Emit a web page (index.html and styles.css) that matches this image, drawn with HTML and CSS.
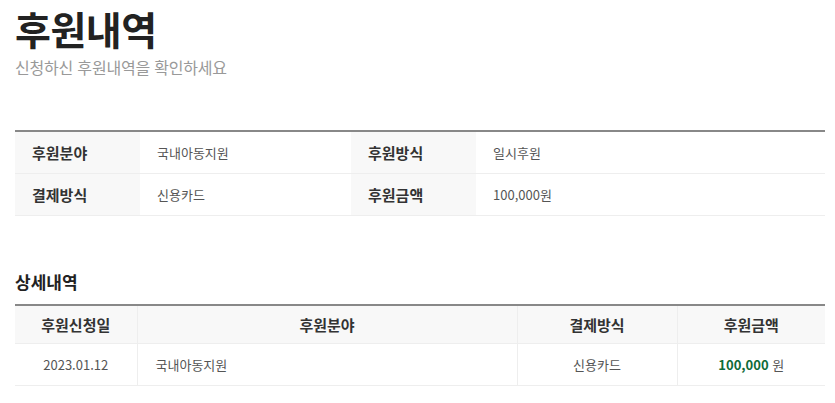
FILE: index.html
```html
<!DOCTYPE html>
<html lang="ko">
<head>
<meta charset="utf-8">
<link rel="stylesheet" href="styles.css">
</head>
<body>
<div class="page">
  <header class="head">
    <h1 class="title">후원내역</h1>
    <p class="sub">신청하신 후원내역을 확인하세요</p>
  </header>

  <table class="summary">
    <colgroup>
      <col class="c-label"><col class="c-val1"><col class="c-label"><col>
    </colgroup>
    <tr>
      <th>후원분야</th><td>국내아동지원</td>
      <th>후원방식</th><td>일시후원</td>
    </tr>
    <tr>
      <th>결제방식</th><td>신용카드</td>
      <th>후원금액</th><td>100,000원</td>
    </tr>
  </table>

  <h2 class="section">상세내역</h2>
  <table class="detail">
    <colgroup>
      <col class="d1"><col class="d2"><col class="d3"><col>
    </colgroup>
    <thead>
      <tr><th>후원신청일</th><th>후원분야</th><th>결제방식</th><th>후원금액</th></tr>
    </thead>
    <tbody>
      <tr>
        <td class="center">2023.01.12</td>
        <td class="left">국내아동지원</td>
        <td class="center">신용카드</td>
        <td class="center"><strong class="amount">100,000</strong> 원</td>
      </tr>
    </tbody>
  </table>
</div>
</body>
</html>
```
FILE: styles.css
```css
* { box-sizing: border-box; }
html, body { margin: 0; padding: 0; background: #fff; }
body {
  font-family: "Noto Sans CJK KR", "Noto Sans", sans-serif;
  color: #333;
}
.page { padding: 0 10px 0 15px; }
.head { padding-top: 0; }
.title {
  margin: 0;
  font-size: 39px;
  line-height: 56px;
  font-weight: 700;
  color: #222;
  letter-spacing: -0.5px;
}
.sub {
  margin: 0;
  font-size: 16px;
  line-height: 22px;
  color: #999;
  letter-spacing: -0.2px;
}
.summary {
  margin-top: 52px;
  width: 810px;
  border-collapse: collapse;
  border-top: 2px solid #888;
  table-layout: fixed;
}
.summary .c-label { width: 125px; }
.summary .c-val1 { width: 211px; }
.summary th, .summary td {
  height: 42px;
  border-bottom: 1px solid #eee;
  text-align: left;
  padding: 0 17px;
}
.summary th {
  background: #f8f8f8;
  font-size: 15px;
  font-weight: 700;
  color: #333;
}
.summary td {
  font-size: 13px;
  color: #555;
}
.section {
  margin: 53px 0 0;
  font-size: 17px;
  line-height: 26px;
  font-weight: 700;
  color: #222;
}
.detail {
  margin-top: 9px;
  width: 810px;
  border-collapse: collapse;
  border-top: 2px solid #888;
  table-layout: fixed;
}
.detail .d1 { width: 122px; }
.detail .d2 { width: 380px; }
.detail .d3 { width: 160px; }
.detail th {
  height: 39px;
  background: #f8f8f8;
  font-size: 15px;
  font-weight: 700;
  color: #333;
  text-align: center;
  border-bottom: 1px solid #eee;
  border-left: 1px solid #eee;
}
.detail td {
  height: 42px;
  font-size: 13px;
  color: #555;
  border-bottom: 1px solid #eee;
  border-left: 1px solid #eee;
}
.detail th:first-child, .detail td:first-child { border-left: 0; }
.detail .center { text-align: center; }
.detail .left { text-align: left; padding-left: 18px; }
.amount { color: #0f6b3a; font-weight: 700; }
```
